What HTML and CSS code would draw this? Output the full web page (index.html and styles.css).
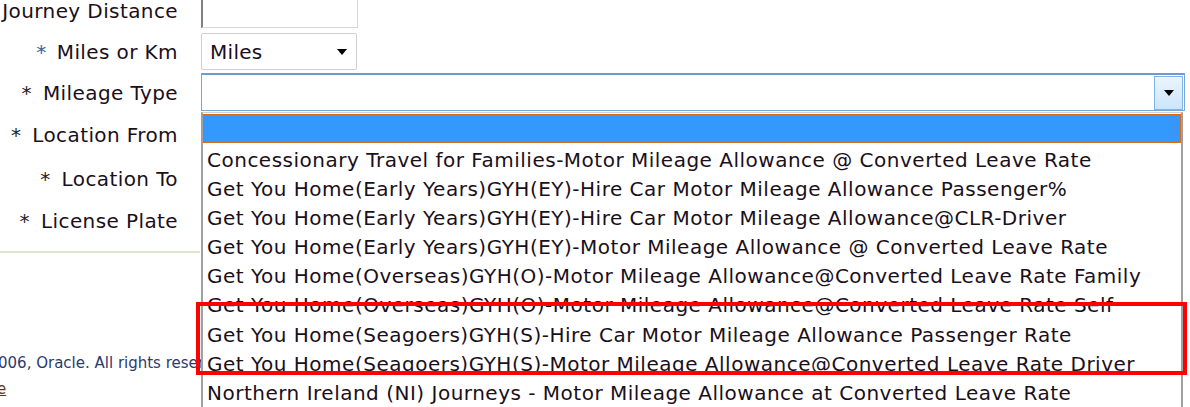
FILE: index.html
```html
<!DOCTYPE html>
<html>
<head>
<meta charset="utf-8">
<link rel="stylesheet" href="styles.css">
</head>
<body>
<div class="page">
  <div class="form">
    <div class="label">Journey Distance</div>
    <div class="cell"><div class="input"></div></div>

    <div class="label"><span class="req blue">*</span>Miles or Km</div>
    <div class="cell"><div class="select small"><span>Miles</span><span class="arrow"></span></div></div>

    <div class="label"><span class="req">*</span>Mileage Type</div>
    <div class="cell"><div class="select wide"><span></span><span class="btn"><span class="arrow"></span></span></div></div>

    <div class="label"><span class="req">*</span>Location From</div>
    <div class="cell"></div>

    <div class="label"><span class="req">*</span>Location To</div>
    <div class="cell"></div>

    <div class="label"><span class="req">*</span>License Plate</div>
    <div class="cell"></div>
  </div>
  <div class="rule"></div>
  <div class="footer">
    <div class="copy">006, Oracle. All rights reserved.</div>
    <div class="link">e</div>
  </div>

  <ul class="list">
    <li class="sel"></li>
    <li>Concessionary Travel for Families-Motor Mileage Allowance @ Converted Leave Rate</li>
    <li>Get You Home(Early Years)GYH(EY)-Hire Car Motor Mileage Allowance Passenger%</li>
    <li>Get You Home(Early Years)GYH(EY)-Hire Car Motor Mileage Allowance@CLR-Driver</li>
    <li>Get You Home(Early Years)GYH(EY)-Motor Mileage Allowance @ Converted Leave Rate</li>
    <li>Get You Home(Overseas)GYH(O)-Motor Mileage Allowance@Converted Leave Rate Family</li>
    <li>Get You Home(Overseas)GYH(O)-Motor Mileage Allowance@Converted Leave Rate Self</li>
    <li>Get You Home(Seagoers)GYH(S)-Hire Car Motor Mileage Allowance Passenger Rate</li>
    <li>Get You Home(Seagoers)GYH(S)-Motor Mileage Allowance@Converted Leave Rate Driver</li>
    <li>Northern Ireland (NI) Journeys - Motor Mileage Allowance at Converted Leave Rate</li>
  </ul>
  <div class="highlight"></div>
</div>
</body>
</html>
```
FILE: styles.css
```css
html, body {
  margin: 0;
  padding: 0;
  background: #fff;
  overflow: hidden;
}
body {
  font-family: "DejaVu Sans", sans-serif;
  font-size: 20px;
  color: #1a0f1a;
}
.page {
  position: relative;
  width: 1190px;
  height: 407px;
  overflow: hidden;
}
.form {
  display: grid;
  grid-template-columns: 201px 1fr;
  grid-template-rows: 40px 42px 40px 44px 43px 42px;
  margin-top: -9px;
}
.label {
  display: flex;
  align-items: center;
  justify-content: flex-end;
  padding-right: 23px;
  white-space: nowrap;
  letter-spacing: 0.4px;
}
.req {
  color: #222;
  margin-right: 11px;
}
.req.blue {
  color: #336699;
  margin-right: 10px;
}
.cell {
  display: flex;
  align-items: flex-start;
}
.input {
  width: 154px;
  height: 35px;
  border: 1px solid #d6d6d6;
  border-left: 2px solid #808080;
  border-top-color: #9a9a9a;
  background: #fff;
}
.select {
  display: flex;
  align-items: center;
  justify-content: space-between;
  box-sizing: border-box;
  background: #fff;
}
.select.small {
  width: 156px;
  height: 37px;
  margin-top: 2px;
  border: 1px solid #cfcfcf;
  border-radius: 2px;
  padding: 0 9px 0 8px;
  letter-spacing: 0.3px;
}
.select.wide {
  width: 984px;
  height: 38px;
  border: 1px solid #7aa7d4;
  border-top: 2px solid #6b9ccd;
  padding: 0 1px 0 0;
}
.arrow {
  width: 0;
  height: 0;
  border-left: 5px solid transparent;
  border-right: 5px solid transparent;
  border-top: 6px solid #000;
}
.btn {
  width: 29px;
  height: 34px;
  box-sizing: border-box;
  border: 1px solid #7eb4ea;
  background: linear-gradient(#eaf5fd, #cbe5f9);
  display: flex;
  align-items: center;
  justify-content: center;
}
.rule {
  height: 2px;
  width: 200px;
  background: #dfe6cf;
  margin-top: 9px;
}
.footer {
  padding-top: 101px;
  font-size: 15px;
  color: #2c3a6e;
}
.copy {
  white-space: nowrap;
  height: 24px;
  margin-left: -2px;
}
.link {
  color: #5a3a1a;
  margin-left: -3px;
  margin-top: 2px;
  text-decoration: underline;
}
.list {
  position: absolute;
  left: 201px;
  top: 112px;
  width: 978px;
  height: 300px;
  margin: 0;
  padding: 0;
  list-style: none;
  background: #fff;
  border-left: 2px solid #a0a0a0;
  border-right: 2px solid #a0a0a0;
  border-top: 1px solid #d0d0d0;
  letter-spacing: 0.5px;
}
.list li {
  height: 29.1px;
  line-height: 29px;
  padding-left: 4px;
  white-space: nowrap;
}
.list li.sel {
  height: 29px;
  margin: 1px 0 3px;
  background: #3399ff;
  border: 1px dotted #d46a1a;
  box-sizing: border-box;
}
.highlight {
  position: absolute;
  left: 196px;
  top: 302px;
  width: 983px;
  height: 65px;
  border: 4px solid #ff0000;
}
```
